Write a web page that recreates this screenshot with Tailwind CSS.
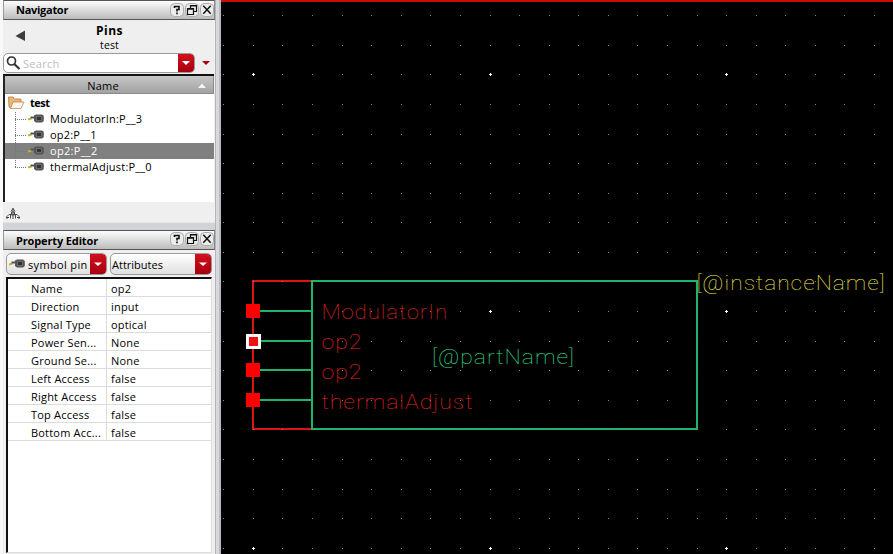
<!DOCTYPE html>
<html lang="en">
<head>
<meta charset="utf-8">
<title>Symbol Editor</title>
<script src="https://cdn.jsdelivr.net/npm/@tailwindcss/browser@4"></script>
</head>
<body class="w-[893px] h-[554px] overflow-hidden bg-black font-['Open_Sans','Noto_Sans',sans-serif] text-[11px] text-black">
<svg class="hidden">
  <symbol id="help" viewBox="0 0 14 14"><rect x=".5" y=".5" width="13" height="13" rx="4" fill="#ececec" stroke="#aaa"/><path d="M4.500 5V3.500H9V6.500H7V8.500M7 9.600V11.200" fill="none" stroke="#111" stroke-width="1.6"/></symbol>
  <symbol id="float" viewBox="0 0 14 14"><rect x=".5" y=".5" width="13" height="13" rx="4" fill="#ececec" stroke="#aaa"/><path d="M5.500 5V2.500H11.500V8.500H9M5 3H12M2.500 5.500H8.500V11.500H2.500ZM2 6.200H9" fill="none" stroke="#111" stroke-width="1.2"/></symbol>
  <symbol id="close" viewBox="0 0 14 14"><rect x=".5" y=".5" width="13" height="13" rx="4" fill="#ececec" stroke="#aaa"/><path d="M3.300 2.700L10.700 10.700M10.700 2.700L3.300 10.700" stroke="#111" stroke-width="1.5"/></symbol>
  <symbol id="pin" viewBox="0 0 16 10"><path d="M0 5.500L3.500 4.500" stroke="#c9b51c" stroke-width="2"/><path d="M2.500 3.500H8" stroke="#555" stroke-width="2"/><path d="M6 1.500L8 .5H14L15.800 2V7L14 8.500H8L6 7Z" fill="#555"/><path d="M8.500 2.500H13.500V6.500H8.500Z" fill="#333" stroke="#888" stroke-width=".6"/></symbol>
</svg>
<div class="flex w-[893px] h-[554px]">
  <aside class="w-[215px] h-[554px] shrink-0 flex flex-col bg-[#efefef] border-l-[3px] border-[#f8f8f8]">
    <section class="h-[222px] flex flex-col">
      <header class="h-[20px] flex items-center border border-[#555] border-r-[#888] border-l-[#999] bg-linear-to-b from-[#fdfdfd] to-[#bcbcbc] pl-[12px]">
        <h1 class="flex-1 font-bold text-[11px] leading-[17px] tracking-[-0.28px]">Navigator</h1>
        <div class="flex gap-px"><svg class="w-[14px] h-[14px]"><use href="#help"/></svg><svg class="w-[14px] h-[14px]"><use href="#float"/></svg><svg class="w-[14px] h-[14px]"><use href="#close"/></svg></div>
      </header>
      <div class="h-[33px] flex items-start">
        <svg class="w-[30px] h-[33px]"><path d="M12.500 16L22 10.500V21Z" fill="#3c3c3c"/></svg>
        <div class="flex-1 flex flex-col items-center pr-[29px] pt-[3px]">
          <span class="font-bold text-[12px] leading-[16px] tracking-[0.5px]">Pins</span>
          <span class="text-[10.500px] leading-[12px] tracking-[0.1px]">test</span>
        </div>
      </div>
      <div class="h-[20px] flex items-center">
        <div class="w-[192px] h-[20px] flex items-center bg-white border border-[#9a9a9a] rounded-[5px] overflow-hidden">
          <svg class="w-[19px] h-[18px]"><circle cx="7.500" cy="7" r="4" fill="none" stroke="#333" stroke-width="1.700"/><path d="M10.300 10L15.500 15" stroke="#333" stroke-width="2.200"/></svg>
          <span class="flex-1 pt-[2px] text-[#bdbdbd] tracking-[0.3px]">Search</span>
          <svg class="w-[16px] h-[18px] bg-linear-to-b from-[#d4101c] to-[#a80010]"><path d="M4 7H12L8 11Z" fill="#fff"/></svg>
        </div>
        <svg class="w-[19px] h-[20px]"><path d="M7 8H15L11 12Z" fill="#a80012"/></svg>
      </div>
      <div class="h-[129px] mt-px mr-[1px] border-t-2 border-l-2 border-t-[#111] border-l-[#222] bg-white flex flex-col">
        <div class="h-[18px] flex items-center bg-linear-to-b from-[#c6c6c6] to-[#a2a2a2] border-r border-b border-[#8a8a8a]">
          <span class="flex-1 text-center pl-[6px] pt-[3px] tracking-[0.2px]">Name</span>
          <svg class="w-[18px] h-[16px]"><path d="M3 12H11L7 7.500Z" fill="#f4f4f4"/></svg>
        </div>
        <div class="h-[17px] flex items-center">
          <svg class="w-[25px] h-[17px]"><path d="M3.500 3H8L9.500 5H16V8L6 14.500L4 13Z" fill="#edb675" stroke="#b9793a" stroke-width=".8"/><path d="M5.500 14.500L8 8H19L16 14.500Z" fill="#fbf6ee" stroke="#bd8651" stroke-width=".8"/></svg>
          <span class="font-bold text-[11px] tracking-[-0.5px] pt-[2px]">test</span>
        </div>
        <div class="relative flex flex-col">
          <svg class="absolute left-0 top-0 w-[26px] h-[64px] z-10"><path d="M10.500 -1V56.500M10 8.500H21M10 24.500H21M10 40.500H21M10 56.500H21" fill="none" stroke="#777" stroke-dasharray="1 1"/></svg>
          <div class="h-[16px] flex items-center pl-[23px]"><svg class="w-[16px] h-[10px] mr-[6px]"><use href="#pin"/></svg><span class="leading-[16px] tracking-[0.2px]">ModulatorIn:P__3</span></div>
          <div class="h-[16px] flex items-center pl-[23px]"><svg class="w-[16px] h-[10px] mr-[6px]"><use href="#pin"/></svg><span class="leading-[16px] tracking-[0.2px]">op2:P__1</span></div>
          <div class="h-[16px] flex items-center pl-[23px] bg-[#808080] text-white"><svg class="w-[16px] h-[10px] mr-[6px]"><use href="#pin"/></svg><span class="leading-[16px] tracking-[0.3px]">op2:P__2</span></div>
          <div class="h-[16px] flex items-center pl-[23px]"><svg class="w-[16px] h-[10px] mr-[6px]"><use href="#pin"/></svg><span class="leading-[16px] tracking-[0.2px]">thermalAdjust:P__0</span></div>
        </div>
      </div>
      <svg class="w-[24px] h-[20px]"><path d="M10 6V17M8 9.500L10 6.500L12 9.500M4 17V14.500L6 12.500H14L16 14.500V17M7.500 12.500V16.500M12.500 12.500V16.500M8.500 10H11.500V13H8.500ZM3 15.500H6M14 15.500H17" fill="none" stroke="#4a4a4a" stroke-width="1"/></svg>
    </section>
    <div class="h-[8px] bg-[#d2d3d7] border-t border-[#e4e4e6]"></div>
    <section class="flex-1 flex flex-col">
      <header class="h-[20px] flex items-center border border-[#555] border-r-[#888] border-l-[#999] bg-linear-to-b from-[#fdfdfd] to-[#bcbcbc] pl-[12px]">
        <h1 class="flex-1 font-bold text-[11px] leading-[17px] tracking-[-0.14px]">Property Editor</h1>
        <div class="flex gap-px pb-[2px]"><svg class="w-[14px] h-[14px]"><use href="#help"/></svg><svg class="w-[14px] h-[14px]"><use href="#float"/></svg><svg class="w-[14px] h-[14px]"><use href="#close"/></svg></div>
      </header>
      <div class="h-[27px] pt-[3px] pl-[3px] flex gap-[3px]">
        <div class="w-[101px] h-[22px] flex items-center border border-[#999] rounded-[5px] bg-linear-to-b from-white to-[#e0e0e0] overflow-hidden">
          <svg class="w-[16px] h-[10px] ml-[2px] mr-[3px]"><use href="#pin"/></svg>
          <span class="flex-1 pt-[2px] whitespace-nowrap tracking-[0.35px]">symbol pin</span>
          <svg class="w-[16px] h-[20px] bg-linear-to-b from-[#d4101c] to-[#a80010]"><path d="M4 8.500H12L8 12Z" fill="#fff"/></svg>
        </div>
        <div class="w-[102px] h-[22px] flex items-center border border-[#999] rounded-[5px] bg-linear-to-b from-white to-[#e0e0e0] overflow-hidden">
          <span class="flex-1 pl-px pt-[2px]">Attributes</span>
          <svg class="w-[16px] h-[20px] bg-linear-to-b from-[#d4101c] to-[#a80010]"><path d="M4 8.500H12L8 12Z" fill="#fff"/></svg>
        </div>
      </div>
      <div id="props" class="ml-[3px] mr-[3px] h-[276px] border-t-2 border-l-2 border-[#111] border-r border-b border-r-[#ddd] border-b-[#ddd] bg-white"></div>
    </section>
  </aside>
  <div class="w-[6px] h-[554px] shrink-0 border-l border-r-2 border-l-[#b4b4b8] border-r-[#b9babf] bg-[#d8d9de]"></div>
  <main class="w-[672px] h-[554px] bg-black">
    <svg width="672" height="554" viewBox="221 0 672 554" class="block font-['Roboto','Open_Sans',sans-serif]">
      <rect x="221" y="0" width="672" height="2" fill="#cc0a0c"/>
      <path d="M312 281H253V429H312" fill="none" stroke="#dc1414" stroke-width="2"/>
      <path d="M312 281H697V429H312ZM253 311H312M253 341H312M253 370H312M253 400H312" fill="none" stroke="#1eb46a" stroke-width="2"/>
      <g id="grid"></g>
      <path d="M246 304H260V318H246ZM246 363H260V377H246ZM246 393H260V407H246Z" fill="#f00"/>
      <rect x="247.500" y="335.500" width="12" height="12" fill="#f01010" stroke="#fff" stroke-width="3"/>
      <g font-size="21" font-weight="100" letter-spacing="0.9" fill="#f02424">
        <text x="321.500" y="319" textLength="126.500" lengthAdjust="spacingAndGlyphs">ModulatorIn</text>
        <text x="321.500" y="349" textLength="41" lengthAdjust="spacingAndGlyphs">op2</text>
        <text x="321.500" y="379" textLength="41" lengthAdjust="spacingAndGlyphs">op2</text>
        <text x="321.500" y="409" textLength="152" lengthAdjust="spacingAndGlyphs">thermalAdjust</text>
        <text x="432" y="364" textLength="143" lengthAdjust="spacingAndGlyphs" fill="#34e094">[@partName]</text>
        <text x="696.500" y="290" textLength="189" lengthAdjust="spacingAndGlyphs" fill="#f0e850">[@instanceName]</text>
      </g>
    </svg>
  </main>
</div>
<script>
const rows = [['Name','op2'],['Direction','input'],['Signal Type','optical'],['Power Sen...','None'],['Ground Se...','None'],['Left Access','false'],['Right Access','false'],['Top Access','false'],['Bottom Acc...','false']];
document.getElementById('props').innerHTML = rows.map(r =>
  `<div class="h-[18px] flex border-b border-[#dcdcdc] leading-[19px] tracking-[0.2px]"><span class="w-[99px] pl-[23px] border-r border-[#dcdcdc]">${r[0]}</span><span class="pl-[4px]">${r[1]}</span></div>`).join('');
let dots = '', majors = '';
for (let i = -1; i <= 21; i++) for (let j = 0; j <= 18; j++) {
  const x = Math.floor(253.41 + 29.575 * i), y = Math.floor(15.82 + 29.575 * j);
  if (i % 8 === 0 && j % 8 === 2) majors += `M${x-1} ${y}h3v1h-3zM${x} ${y-1}h1v3h-1z`;
  else dots += `M${x} ${y}h1v1h-1z`;
}
document.getElementById('grid').innerHTML = `<path d="${dots}" fill="#8a8a8a"/><path d="${majors}" fill="#fff"/>`;
</script>
</body>
</html>
